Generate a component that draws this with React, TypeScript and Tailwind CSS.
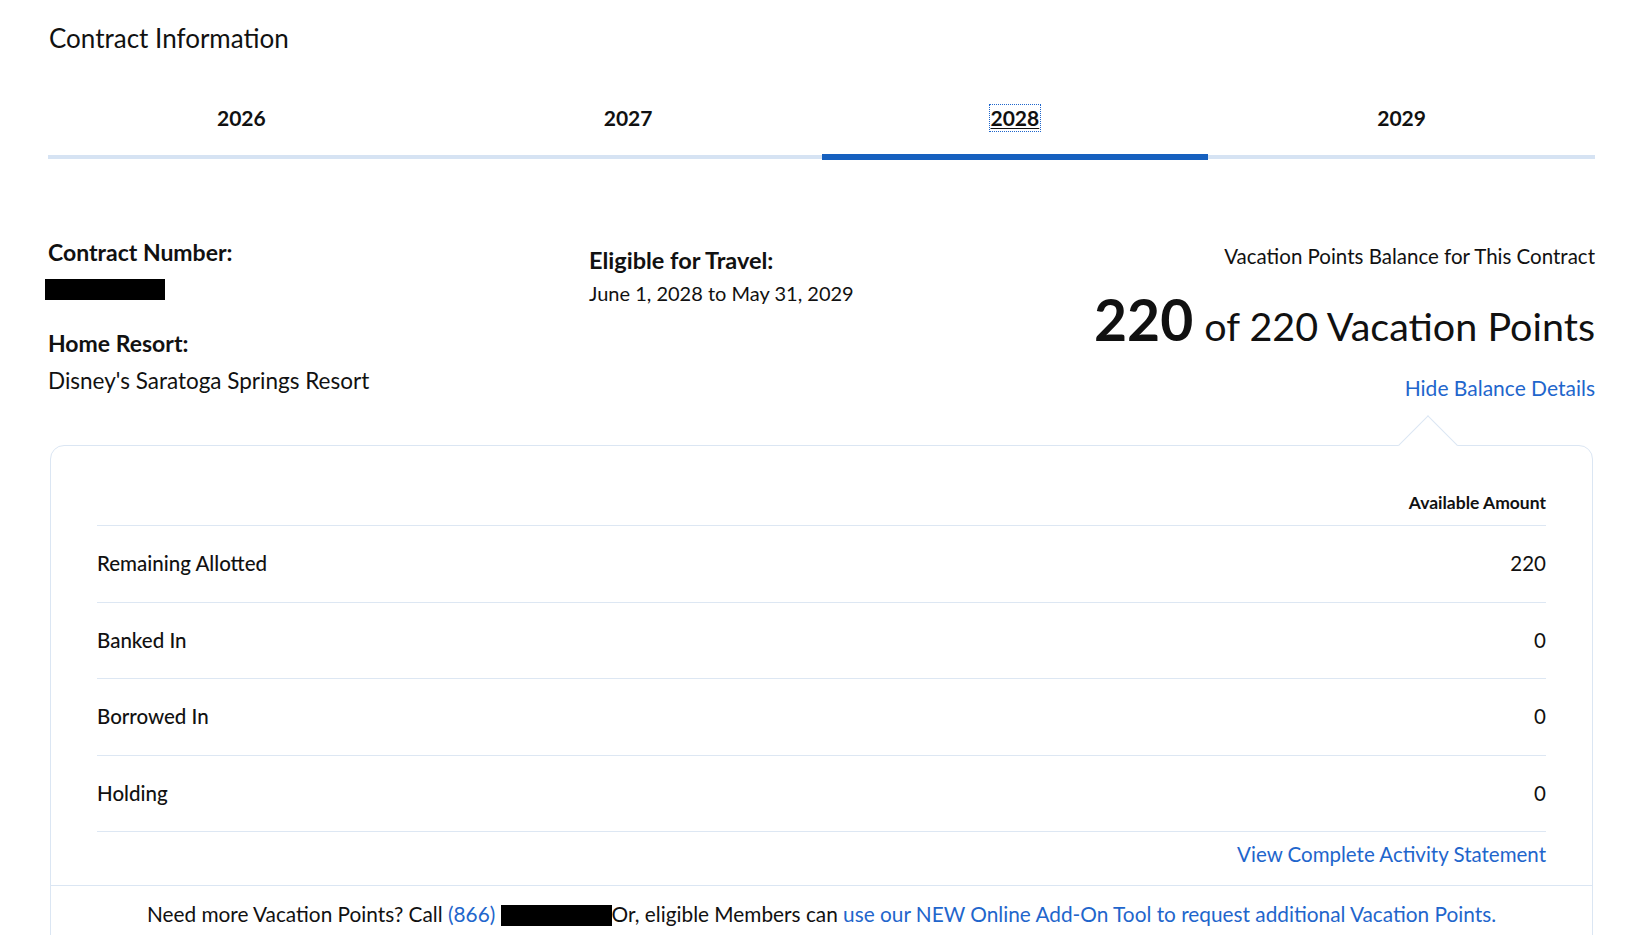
import React from "react";

const years = ["2026", "2027", "2028", "2029"];

const balanceRows = [
  { label: "Remaining Allotted", amount: "220" },
  { label: "Banked In", amount: "0" },
  { label: "Borrowed In", amount: "0" },
  { label: "Holding", amount: "0" },
];

const Redacted: React.FC<{ className?: string }> = ({ className = "" }) => (
  <span className={`inline-block bg-black align-middle ${className}`} />
);

export default function App() {
  const activeYear = "2028";

  return (
    <div className="min-h-screen bg-white font-['Lato',sans-serif] text-[#111] px-[48px] pt-[22px]">
      <h1 className="text-[26px] leading-[32px] font-normal ml-[1px]">Contract Information</h1>

      {/* Year tabs */}
      <div className="grid grid-cols-4 mt-[52px]">
        {years.map((y) => {
          const active = y === activeYear;
          return (
            <div key={y} className="flex flex-col items-center">
              <span
                className={`text-[21px] leading-[24px] font-bold ${
                  active ? "underline decoration-1 underline-offset-2 outline-dotted outline-1 outline-[#1f66cc] outline-offset-1" : ""
                }`}
              >
                {y}
              </span>
              <div className="mt-[24px] w-full h-[6px] flex items-center">
                <div className={`w-full ${active ? "h-[6px] bg-[#1660bf]" : "h-[4px] bg-[#d6e3f3]"}`} />
              </div>
            </div>
          );
        })}
      </div>

      {/* Contract summary */}
      <div className="flex mt-[79px]">
        <div className="w-[541px] shrink-0">
          <div className="text-[23px] leading-[26px] font-bold">Contract Number:</div>
          <Redacted className="w-[120px] h-[21px] -ml-[3px] mt-[14px]" />
          <div className="text-[23px] leading-[26px] font-bold mt-[30px]">Home Resort:</div>
          <div className="text-[22.5px] leading-[26px] mt-[12px]">Disney's Saratoga Springs Resort</div>
        </div>
        <div className="flex-1 pt-[8px]">
          <div className="text-[23.5px] leading-[26px] font-bold">Eligible for Travel:</div>
          <div className="text-[20px] leading-[26px] mt-[7px]">June 1, 2028 to May 31, 2029</div>
        </div>
        <div className="flex flex-col items-end pt-[4px]">
          <div className="text-[20.5px] leading-[26px]">Vacation Points Balance for This Contract</div>
          <div className="flex items-baseline mt-[22px] leading-none">
            <span className="text-[57px] font-bold">220</span>
            <span className="text-[39.5px] ml-[11px]">of 220 Vacation Points</span>
          </div>
          <a href="#" className="text-[21px] leading-[26px] text-[#1f66cc] mt-[27px]">Hide Balance Details</a>
        </div>
      </div>

      {/* Balance details card */}
      <div className="relative mx-[2px] mt-[44px] border border-[#dbe6f3] rounded-[14px] bg-white">
        <div className="absolute -top-[22px] right-[143px] w-[42px] h-[42px] rotate-45 bg-white border-l border-t border-[#dbe6f3]" />
        <div className="relative px-[46px]">
          <div className="pt-[47px] pb-[12px] text-right text-[17.5px] leading-[20px] font-bold">Available Amount</div>
          {balanceRows.map((r) => (
            <div key={r.label} className="flex items-center justify-between h-[76.5px] border-t border-[#dde7f3] text-[20.5px]">
              <span className="font-medium">{r.label}</span>
              <span>{r.amount}</span>
            </div>
          ))}
          <div className="border-t border-[#dde7f3] pt-[12px] pb-[21px] text-right text-[20.5px] leading-[20px]">
            <a href="#" className="text-[#1f66cc]">View Complete Activity Statement</a>
          </div>
        </div>
        <div className="border-t border-[#dbe6f3] pt-[17px] pb-[24px] text-center text-[20.8px] leading-[22px]">
          Need more Vacation Points? Call <a href="#" className="text-[#1f66cc]">(866)</a>{" "}
          <Redacted className="w-[111px] h-[21px] -mt-[2px]" />
          Or, eligible Members can{" "}
          <a href="#" className="text-[#1f66cc]">use our NEW Online Add-On Tool to request additional Vacation Points.</a>
        </div>
      </div>
    </div>
  );
}
